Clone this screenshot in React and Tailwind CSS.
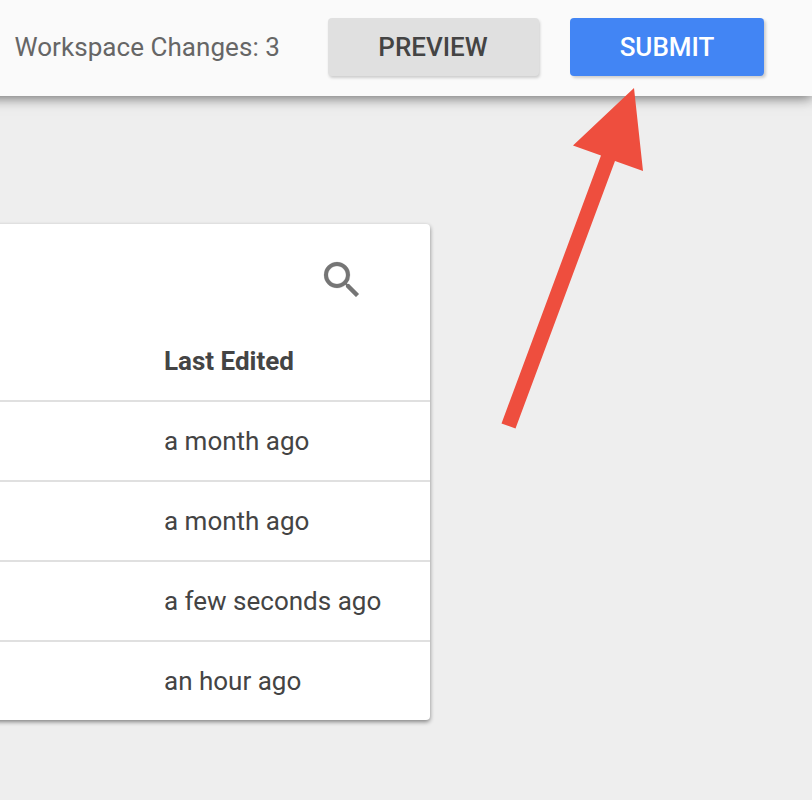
const rows = ['a month ago', 'a month ago', 'a few seconds ago', 'an hour ago'];

function Header() {
  return (
    <header className="relative -ml-5 flex h-24 items-start bg-[#fafafa] pt-[18px] pl-5 shadow-[0_2px_12px_rgba(0,0,0,0.55)]">
      <span className="ml-[14.5px] w-[313.5px] whitespace-nowrap leading-[58px] tracking-[0.05px] text-[#666]">
        Workspace Changes: 3
      </span>
      <button className="h-[58px] w-[211px] rounded-[4px] bg-[#e0e0e0] pr-px font-medium text-[#444] shadow-[1px_2px_3px_rgba(0,0,0,0.18)]">
        PREVIEW
      </button>
      <button className="ml-[31px] h-[58px] w-[194px] rounded-[4px] bg-[#4285f4] font-medium text-white shadow-[2px_2px_3px_rgba(0,0,0,0.18)]">
        SUBMIT
      </button>
    </header>
  );
}

function SearchIcon() {
  return (
    <svg className="size-12" viewBox="0 0 24 24" fill="#757575" stroke="#757575" strokeWidth="0.1" aria-label="Search">
      <path d="M15.5 14h-.79l-.28-.27A6.471 6.471 0 0 0 16 9.5 6.5 6.5 0 1 0 9.5 16c1.61 0 3.09-.59 4.23-1.57l.27.28v.79l5 4.99L20.49 19l-4.99-5zm-6 0C7.01 14 5 11.99 5 9.5S7.01 5 9.5 5 14 7.01 14 9.5 11.99 14 9.5 14z" />
    </svg>
  );
}

function Arrow() {
  return (
    <svg className="pointer-events-none absolute top-[84px] left-[496px] h-[350px] w-[152px]" viewBox="496 84 152 350" fill="#ee4e3e">
      <polygon points="634,88 573,145.5 601,155.5 501.5,423.5 515.5,428.5 615,161 643,171" />
    </svg>
  );
}

export default function App() {
  return (
    <div className="relative h-[800px] w-[812px] overflow-hidden bg-[#eee] font-['Roboto',sans-serif] text-[26px]">
      <Header />
      <section className="mt-32 -ml-5 h-[496px] w-[450px] rounded-[4px] bg-white pl-5 text-[#444] shadow-[0_2px_4px_rgba(0,0,0,0.45)]">
        <div className="flex h-[98px] justify-end pt-8 pr-16">
          <SearchIcon />
        </div>
        <div className="h-[78px] pl-[164px] leading-[78px] font-bold">Last Edited</div>
        {rows.map((row, i) => (
          <div key={i} className="h-20 border-t-2 border-[#e0e0e0] pl-[164px] leading-[78px]">
            {row}
          </div>
        ))}
      </section>
      <Arrow />
    </div>
  );
}
